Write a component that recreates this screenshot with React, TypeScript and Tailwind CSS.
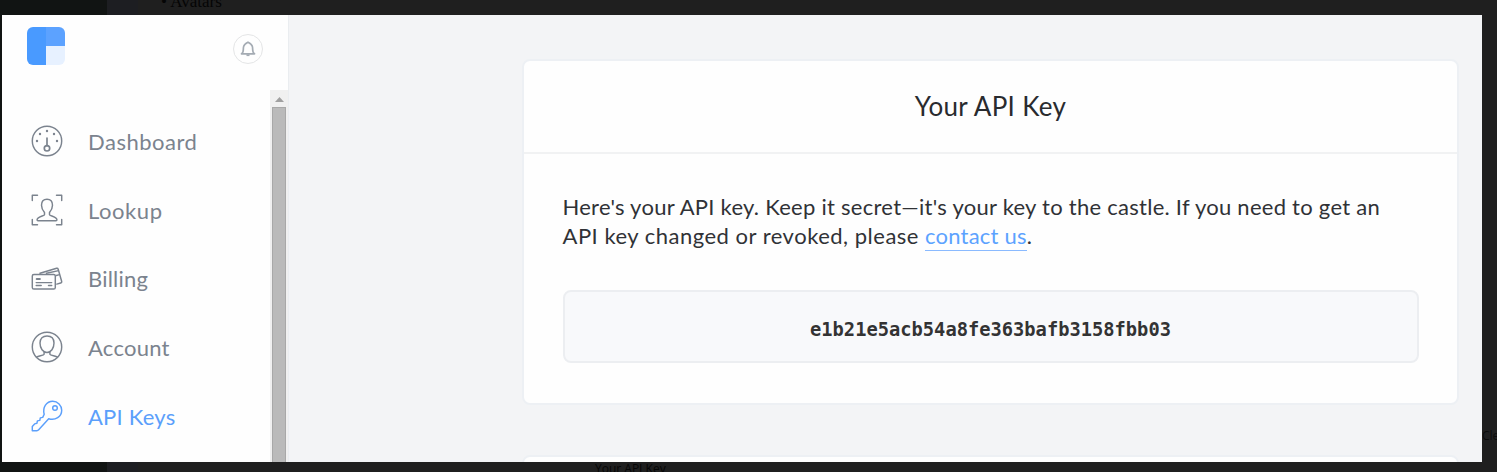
import type { ReactNode } from 'react';

function Icon({ children }: { children: ReactNode }) {
  return (
    <svg width="32" height="32" viewBox="0 0 32 32" fill="none" stroke="currentColor" strokeWidth="1.45" strokeLinecap="round" strokeLinejoin="round" className="shrink-0">
      {children}
    </svg>
  );
}

const gauge = (
  <Icon>
    <circle cx="16" cy="16" r="14.7" />
    <path d="M16 13v7.7" strokeWidth="1.7" />
    <circle cx="16" cy="23.3" r="2.7" strokeWidth="1.7" />
    <g fill="currentColor" stroke="none">
      <circle cx="6" cy="16" r="1.2" />
      <circle cx="26" cy="16" r="1.2" />
      <circle cx="9" cy="9" r="1.2" />
      <circle cx="23" cy="9" r="1.2" />
      <circle cx="16" cy="6" r="1.2" />
    </g>
  </Icon>
);

const lookup = (
  <Icon>
    <path d="M1.3 6.5V1.3h5.2M25.5 1.3h5.2v5.2M30.7 25.5v5.2h-5.2M6.5 30.7H1.3v-5.2" />
    <path d="M16 5.2c-3.8 0-5.5 2.4-5.5 6 0 3.5 1.3 5.3 3 7.3v2.2c0 1.2-6.9 1.9-7.4 5-.1.9.3 1 .9 1h18c.6 0 1-.1.9-1-.5-3.1-7.4-3.8-7.4-5v-2.2c1.7-2 3-3.8 3-7.300 0-3.600-1.700-6-5.500-6z" />
  </Icon>
);

const billing = (
  <Icon>
    <rect x="1.3" y="11.5" width="23" height="14.5" rx="1.6" />
    <path d="M9 10.2 25.6 5.3q1.2-.3 1.6.9l3.5 12.3q.2 1.2-1 1.5l-3.900 1.100M15.500 10.300 27.600 7.600M25.300 12.500l3.100-.9" />
    <path d="M5.2 19.6h15.5M5.2 22.5h5M17.500 22.500h3.200" />
    <path d="M5.8 16h3" strokeWidth="2.2" />
  </Icon>
);

const account = (
  <Icon>
    <circle cx="16" cy="16" r="14.7" />
    <path d="M16 4.9c-4.200 0-7 2.500-7 7.200 0 5.200 3 9.400 7 9.400s7-4.200 7-9.400c0-4.700-2.800-7.200-7-7.200z" />
    <path d="M13.100 20.800v2.400c-.3 1.200-5.400 1.700-7.600 3M18.900 20.800v2.400c.3 1.200 5.400 1.700 7.600 3" />
  </Icon>
);

const keyIcon = (
  <Icon>
    <path d="M13.200 14.200C11.300 7.400 15.500 1.300 21.700 1.300a9 9 0 0 1 9 9c0 6.400-6.300 10.500-13 8.500l-10 11q-.8.900-1.800.900H1.300v-4.300l2.300-2.500 2.300-.6.500-2.400 2.400-.5.500-2.500 2.400-.5z" />
    <circle cx="24" cy="8" r="2.3" />
  </Icon>
);

const items = [
  { label: 'Dashboard', icon: gauge, text: 'tracking-[0.5px]' },
  { label: 'Lookup', icon: lookup, text: 'tracking-[0.55px]' },
  { label: 'Billing', icon: billing, text: 'tracking-[0.2px]' },
  { label: 'Account', icon: account, text: 'tracking-[0.25px]' },
  { label: 'API Keys', icon: keyIcon, text: 'tracking-[0.22px]', active: true },
];

function Sidebar() {
  return (
    <aside className="flex w-[287px] shrink-0 flex-col border-r border-[#eaedf0] bg-[#fefefe]">
      <div className="flex h-[75px] shrink-0 items-start justify-between pr-[25px] pl-[25px] pt-3">
        <svg width="38" height="38" viewBox="0 0 38 38">
          <path d="M6 0h13v38H6a6 6 0 0 1-6-6V6a6 6 0 0 1 6-6z" fill="#499aff" />
          <path d="M19 0h13a6 6 0 0 1 6 6v13H19z" fill="#5ca2ff" />
          <path d="M19 19h19v13a6 6 0 0 1-6 6H19z" fill="#e7f1ff" />
        </svg>
        <button className="mt-[7px] flex size-[30px] items-center justify-center rounded-full border border-[#e4e5e6] text-[#a4abb3]">
          <svg width="16" height="16" viewBox="0 0 16 16" fill="none" stroke="currentColor" strokeWidth="1.7" strokeLinejoin="round">
            <path d="M1.5 12.8c2.7-1.3 1.4-4.6 2.1-7.2C4.2 3.2 5.900 2.200 8 1.200c2.100 1 3.800 2 4.400 4.400.7 2.600-.6 5.900 2.100 7.200z" />
            <path d="M6.500 14.200h3" strokeWidth="1.8" />
          </svg>
        </button>
      </div>
      <div className="flex min-h-0 flex-1 justify-between">
        <nav className="flex flex-col pt-[17px] pl-[29px]">
          {items.map((it) => (
            <a key={it.label} className={`flex h-[68.7px] shrink-0 items-center gap-[25px] ${it.active ? 'text-[#5b9ffb]' : 'text-[#7b838e]'}`}>
              {it.icon}
              <span className={`mt-px text-[22px] leading-7 whitespace-nowrap ${it.text}`}>{it.label}</span>
            </a>
          ))}
        </nav>
        <div className="flex w-[18px] shrink-0 flex-col bg-[#f0f0f0] pl-[2px]">
          <div className="flex h-[17px] w-[14px] items-center justify-center">
            <svg width="9" height="5" viewBox="0 0 9 5" className="mt-0.5"><path d="M0 5 4.5 0 9 5z" fill="#a0a0a0" /></svg>
          </div>
          <div className="w-[14px] flex-1 border border-b-0 border-[#a8a8a8] bg-[#bababa]" />
        </div>
      </div>
    </aside>
  );
}

export default function App() {
  return (
    <div className="flex h-[472px] w-[1497px] flex-col overflow-hidden bg-[#1f1f1f] font-[Lato,sans-serif]">
      <div className="flex h-[15px] shrink-0 overflow-hidden">
        <div className="w-[107px] bg-[#111413]" />
        <div className="w-[31px] bg-[#1d1e22]" />
        <div className="mt-[-7px] pl-[23px] font-['Liberation_Serif',serif] text-[17px] leading-[18px] text-[#050505]">• Avatars</div>
      </div>
      <div className="flex h-[447px] shrink-0">
        <div className="w-[2px] shrink-0 bg-[#111413]" />
        <Sidebar />
        <main className="flex w-[1193px] shrink-0 flex-col gap-[50px] overflow-hidden bg-[#f3f4f6] pt-[44px] pr-[23px] pl-[233px]">
          <section className="h-[346px] shrink-0 rounded-lg border-2 border-[#edf0f4] bg-[#fefefe]">
            <h1 className="flex h-[93px] items-center justify-center border-b-2 border-[#f1f2f3] text-[26px] text-[#292b2f]">
              <span className="-mt-px tracking-[0.33px]">Your API Key</span>
            </h1>
            <div className="px-[38.5px] pt-[38px]">
              <p className="text-[22px] leading-[29px] whitespace-nowrap text-[#303236]">
                <span className="tracking-[0.265px]">Here's your API key. Keep it secret—it's your key to the castle. If you need to get an</span>
                <br />
                <span className="tracking-[0.5px]">API key changed or revoked, please </span>
                <a className="border-b border-[#8abaff] pb-px tracking-[0.2px] text-[#5ca2ff]">contact us</a>.
              </p>
              <div className="mt-[40px] flex h-[73px] items-center justify-center rounded-lg border-2 border-[#eceef1] bg-[#f8f9fb] pt-[7px] font-['DejaVu_Sans_Mono',monospace] text-[18.74px] font-bold text-[#333]">
                <span className="scale-y-[1.07]">e1b21e5acb54a8fe363bafb3158fbb03</span>
              </div>
            </div>
          </section>
          <section className="h-[60px] shrink-0 rounded-lg border-2 border-[#edf0f4] bg-[#fefefe]" />
        </main>
        <div className="flex-1 overflow-hidden pt-[412px] font-['Open_Sans',sans-serif] text-[12px] leading-[18px] whitespace-nowrap text-[#0b0b0b]">Cle</div>
      </div>
      <div className="flex h-[10px] shrink-0 overflow-hidden">
        <div className="w-[107px] bg-[#111413]" />
        <div className="w-[31px] bg-[#1d1e22]" />
        <div className="pl-[457px] font-['Open_Sans',sans-serif] text-[12px] leading-[14px] text-[#050505]">Your API Key</div>
      </div>
    </div>
  );
}
